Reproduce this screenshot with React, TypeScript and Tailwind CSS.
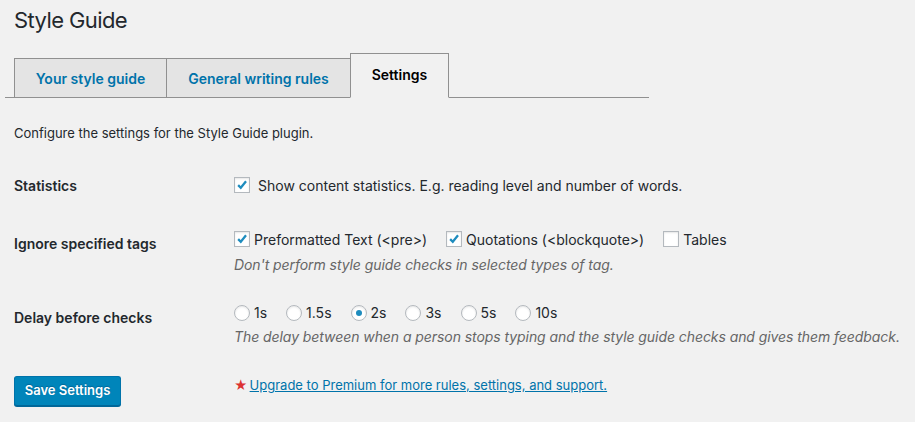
import React from 'react'

const font = { fontFamily: 'Inter, "Noto Sans", sans-serif' }

function Check({ checked }: { checked: boolean }) {
  return (
    <span className="mt-[2px] flex h-[16px] w-[16px] shrink-0 items-center justify-center border border-[#b4b9be] bg-white shadow-[inset_0_1px_2px_rgba(0,0,0,0.1)]">
      {checked && (
        <svg viewBox="0 0 16 16" className="h-[16px] w-[16px]">
          <path d="M3.6 8.2 L6.6 11.2 L12.6 3.8" fill="none" stroke="#1e8cbe" strokeWidth="2.6" />
        </svg>
      )}
    </span>
  )
}

function Radio({ checked }: { checked: boolean }) {
  return (
    <span className="mt-[2px] flex h-[16px] w-[16px] shrink-0 items-center justify-center rounded-full border border-[#b4b9be] bg-white shadow-[inset_0_1px_2px_rgba(0,0,0,0.1)]">
      {checked && <span className="h-[6px] w-[6px] rounded-full bg-[#1e8cbe]" />}
    </span>
  )
}

const tabs = [
  { label: 'Your style guide', w: 'w-[153px]', active: false },
  { label: 'General writing rules', w: 'w-[185px]', active: false },
  { label: 'Settings', w: 'w-[99px]', active: true },
]

export default function App() {
  return (
    <div className="min-h-screen bg-[#f1f1f1] pl-[14px] text-[#23282d]" style={font}>
      {/* Heading */}
      <h1 className="pt-[6px] text-[22px] leading-[29px] font-normal tracking-[-0.6px]">Style Guide</h1>

      {/* Tabs */}
      <div className="-ml-[9px] mt-[18px] flex h-[45px] w-[644px] items-end border-b border-[#909090] pl-[9px]">
        {tabs.map((t, i) => (
          <div
            key={t.label}
            className={
              t.active
                ? `-mb-px flex h-[45px] ${t.w} -ml-px items-center justify-center border border-b-[#f1f1f1] border-[#909090] bg-[#f1f1f1] pb-[2px] text-[14px] font-semibold text-black`
                : `-mb-px flex h-[40px] ${t.w} ${i > 0 ? '-ml-px' : ''} items-center justify-center border border-[#909090] bg-[#e4e4e4] text-[14px] font-semibold text-[#0073aa]`
            }
          >
            {t.label}
          </div>
        ))}
      </div>

      <p className="mt-[26px] text-[13px] leading-[18px]">Configure the settings for the Style Guide plugin.</p>

      {/* Statistics */}
      <div className="mt-[34px] flex items-start">
        <div className="w-[220px] text-[14px] leading-[20px] font-semibold">Statistics</div>
        <label className="flex items-start gap-[8px] text-[14px] leading-[20px]">
          <span className="-mt-px"><Check checked /></span>
          Show content statistics. E.g. reading level and number of words.
        </label>
      </div>

      {/* Ignore tags */}
      <div className="mt-[34px] flex items-start">
        <div className="w-[220px] pt-[4px] text-[14px] leading-[20px] font-semibold">Ignore specified tags</div>
        <div>
          <div className="flex items-start text-[14px] leading-[20px]">
            {[
              ['Preformatted Text (<pre>)', true],
              ['Quotations (<blockquote>)', true],
              ['Tables', false],
            ].map(([l, c]) => (
              <label key={l as string} className="mr-[19px] flex items-start gap-[4px]">
                <span className="-mt-px"><Check checked={c as boolean} /></span>
                {l as string}
              </label>
            ))}
          </div>
          <p className="mt-[6px] text-[14px] leading-[18px] italic tracking-[-0.07px] text-[#666]">
            Don't perform style guide checks in selected types of tag.
          </p>
        </div>
      </div>

      {/* Delay */}
      <div className="mt-[29px] flex items-start">
        <div className="w-[220px] pt-[5px] text-[14px] leading-[20px] font-semibold">Delay before checks</div>
        <div>
          <div className="flex items-start text-[14px] leading-[20px]">
            {['1s', '1.5s', '2s', '3s', '5s', '10s'].map((l) => (
              <label key={l} className="mr-[19px] flex items-start gap-[4px]">
                <Radio checked={l === '2s'} />
                {l}
              </label>
            ))}
          </div>
          <p className="mt-[5px] text-[14px] leading-[18px] italic tracking-[-0.07px] text-[#666]">
            The delay between when a person stops typing and the style guide checks and gives them feedback.
          </p>
        </div>
      </div>

      {/* Footer */}
      <div className="mt-[30px] flex items-start">
        <div className="w-[220px]">
          <button className="h-[30px] w-[107px] rounded-[3px] border border-[#0073aa] border-b-[#006799] bg-[#0085ba] text-[13px] font-semibold text-white shadow-[0_1px_0_#006799] [text-shadow:0_-1px_1px_#006799]">
            Save Settings
          </button>
        </div>
        <div className="flex items-center text-[13px] leading-[18px]">
          <span className="mr-[2px] text-[#dc3232]">★</span>
          <a href="#" className="text-[#0073aa] underline">Upgrade to Premium for more rules, settings, and support.</a>
        </div>
      </div>
    </div>
  )
}
